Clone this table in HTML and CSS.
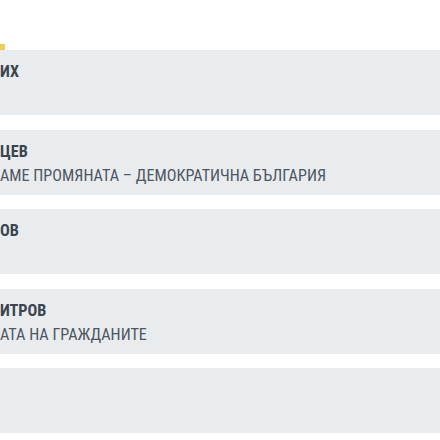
FILE: index.html
```html
<!DOCTYPE html>
<html>
<head>
<meta charset="utf-8">
<title>Кандидати</title>
<link rel="stylesheet" href="styles.css">
</head>
<body>
<div class="list">
  <div class="accent"></div>
  <div class="card">
    <div class="name">ИХ</div>
    <div class="party"></div>
  </div>
  <div class="card">
    <div class="name">ЦЕВ</div>
    <div class="party">АМЕ ПРОМЯНАТА – ДЕМОКРАТИЧНА БЪЛГАРИЯ</div>
  </div>
  <div class="card">
    <div class="name">ОВ</div>
    <div class="party"></div>
  </div>
  <div class="card">
    <div class="name">ИТРОВ</div>
    <div class="party">АТА НА ГРАЖДАНИТЕ</div>
  </div>
  <div class="card">
    <div class="name"></div>
    <div class="party"></div>
  </div>
</div>
</body>
</html>
```
FILE: styles.css
```css
html, body {
  margin: 0;
  padding: 0;
  background: #ffffff;
}
body {
  font-family: "Roboto Condensed", "Liberation Sans Narrow", "DejaVu Sans Condensed", Roboto, sans-serif;
  font-stretch: condensed;
  overflow: hidden;
}
.list {
  padding-top: 44px;
}
.accent {
  width: 5px;
  height: 6px;
  background: #f3cd4b;
}
.card {
  box-sizing: border-box;
  height: 65px;
  margin-bottom: 14.5px;
  padding: 10px 0 0 0;
  background: #e9ecef;
}
.name,
.party {
  font-size: 16.2px;
  line-height: 24px;
  height: 24px;
  white-space: nowrap;
  text-transform: uppercase;
}
.name {
  font-weight: 700;
  color: #3b4550;
}
.party {
  font-weight: 400;
  color: #4d5661;
}
```
